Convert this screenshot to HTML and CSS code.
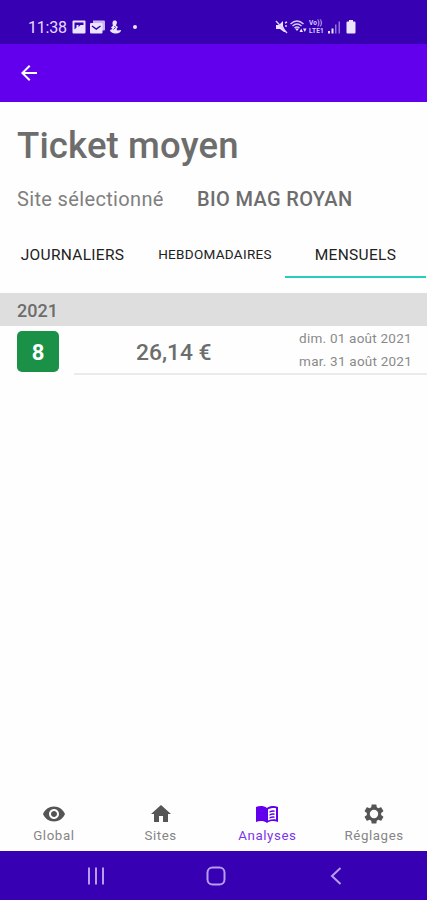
FILE: index.html
```
<!DOCTYPE html>
<html lang="fr">
<head>
  <meta charset="UTF-8">
  <meta name="viewport" content="width=device-width, initial-scale=1">
  <title>Ticket moyen</title>
  <link rel="stylesheet" href="styles.css">
</head>
<body>

  <div class="status-bar">
    <span class="clock">11:38</span>
    <div class="notifications">
      <svg width="14" height="14" viewBox="0 0 14 14">
        <path fill-rule="evenodd" d="M1.500.5h11a1 1 0 0 1 1 1v11a1 1 0 0 1-1 1h-11a1 1 0 0 1-1-1v-11a1 1 0 0 1 1-1zM2.500 2.500v7l2-2V5h2v2l2-2h3V2.500z"/>
      </svg>
      <svg width="15" height="14" viewBox="0 0 15 14">
        <path d="M3 .5h11a1 1 0 0 1 1 1v8a1 1 0 0 1-1 1H3z" opacity=".8"/>
        <rect x="0" y="3" width="12.500" height="10.500" rx="1"/>
        <path class="cut" d="M2 6l4.300 3L10.500 6"/>
      </svg>
      <svg width="13" height="14" viewBox="0 0 13 14">
        <path d="M5.500.5c2.500 0 3 2 2 3.500L7 5.500l2 1.500-1.500 2 1 1.500 3.500-.5c0 2-2 3.500-5 3.500S1 12 1 10l2.500-1L2 7.500l2-2C3 3 3.500.5 5.500.5z"/>
        <path class="cut thin" d="M5.500 6l1 1.500-2 2"/>
      </svg>
      <span class="dot"></span>
    </div>
    <div class="indicators">
      <svg width="13" height="14" viewBox="0 0 13 14">
        <path d="M1 5h3l4-4v5l3 6H9l-4-3H1z"/>
        <path class="line" d="M1 1l11 12M10 3l2-1M10 6h2"/>
      </svg>
      <svg width="17" height="14" viewBox="0 0 17 14">
        <path class="line" d="M0.500 4q6.500-6 13 0M2.500 6q4.500-4 9 0M4.500 8q2.500-2 5 0"/>
        <path d="M5 8.500h4L7 11zM9.500 12l1.700-3.500L13 12zM13 8.500h3.500L14.800 12z"/>
      </svg>
      <span class="volte"><b>Vo))</b><b>LTE1</b></span>
      <svg width="13" height="14" viewBox="0 0 13 14">
        <path d="M0 11h2v2.500H0zM3.500 8.500h2v5h-2z"/>
        <path d="M7 4.500h1.500v9H7zM10.500 1.500H12v12h-1.500z" opacity=".5"/>
      </svg>
      <svg class="battery" width="10" height="14" viewBox="0 0 10 14">
        <path d="M3 0h4v1.500h1.500a1 1 0 0 1 1 1v10a1 1 0 0 1-1 1h-7a1 1 0 0 1-1-1v-10a1 1 0 0 1 1-1H3z"/>
      </svg>
    </div>
  </div>

  <header class="app-bar">
    <svg width="24" height="24" viewBox="0 0 24 24">
      <path d="M20 11H7.830l5.590-5.590L12 4l-8 8 8 8 1.410-1.410L7.830 13H20v-2z"/>
    </svg>
  </header>

  <main>
    <h1>Ticket moyen</h1>
    <div class="site">
      <span class="site-label">Site sélectionné</span>
      <span class="site-name">BIO MAG ROYAN</span>
    </div>

    <div class="tabs">
      <div class="tab">JOURNALIERS</div>
      <div class="tab tab-small">HEBDOMADAIRES</div>
      <div class="tab active">MENSUELS</div>
    </div>

    <div class="year">2021</div>
    <div class="row">
      <div class="month">8</div>
      <div class="row-body">
        <span class="amount">26,14 €</span>
        <div class="dates">
          <span>dim. 01 août 2021</span>
          <span>mar. 31 août 2021</span>
        </div>
      </div>
    </div>
  </main>

  <nav class="bottom-nav">
    <div class="nav-item">
      <svg width="24" height="24" viewBox="0 0 24 24">
        <path d="M12 4.500C7 4.500 2.730 7.610 1 12c1.730 4.390 6 7.500 11 7.500s9.270-3.110 11-7.500c-1.730-4.390-6-7.500-11-7.500zM12 17c-2.760 0-5-2.240-5-5s2.240-5 5-5 5 2.240 5 5-2.240 5-5 5zm0-8c-1.660 0-3 1.340-3 3s1.340 3 3 3 3-1.340 3-3-1.340-3-3-3z"/>
      </svg>
      <span>Global</span>
    </div>
    <div class="nav-item">
      <svg width="24" height="24" viewBox="0 0 24 24">
        <path d="M10 20v-6h4v6h5v-8h3L12 3 2 12h3v8z"/>
      </svg>
      <span>Sites</span>
    </div>
    <div class="nav-item selected">
      <svg width="24" height="24" viewBox="0 0 24 24">
        <path fill-rule="evenodd" d="M1 5C4.500 3.500 9 3.700 12 6c3-2.300 7.500-2.500 11-1v15c-4-1.400-8-1.200-11 1-3-2.200-7-2.400-11-1zM13 7.500v11c2.500-1.200 5.300-1.500 8-1V6.300c-2.700-.7-5.500-.3-8 1.200z"/>
        <path d="M14.500 9.200q2.500-1.200 5-.7v1.500q-2.500-.5-5 .7zM14.500 12.200q2.500-1.200 5-.7V13q-2.500-.5-5 .7zM14.500 15.200q2.500-1.200 5-.7V16q-2.500-.5-5 .7z"/>
      </svg>
      <span>Analyses</span>
    </div>
    <div class="nav-item">
      <svg width="24" height="24" viewBox="0 0 24 24">
        <path d="M19.140 12.940c.04-.3.060-.61.060-.94 0-.32-.02-.64-.07-.94l2.030-1.580c.18-.14.230-.41.120-.61l-1.920-3.320c-.12-.22-.37-.29-.59-.22l-2.390.96c-.5-.38-1.030-.7-1.620-.94l-.36-2.540c-.04-.24-.24-.41-.48-.41h-3.840c-.24 0-.43.170-.47.410l-.36 2.540c-.59.240-1.130.570-1.620.940l-2.390-.96c-.22-.08-.47 0-.59.220L2.740 8.870c-.12.210-.08.470.12.610l2.030 1.580c-.05.300-.09.630-.09.940s.02.640.07.940l-2.030 1.580c-.18.140-.23.410-.12.610l1.920 3.320c.12.220.37.290.59.220l2.390-.96c.5.380 1.030.7 1.620.94l.36 2.540c.05.240.24.410.48.410h3.840c.24 0 .44-.17.470-.41l.36-2.540c.59-.24 1.130-.56 1.620-.94l2.390.96c.22.080.470 0 .59-.22l1.920-3.320c.12-.22.070-.47-.12-.61l-2.010-1.580zM12 16.200a4.200 4.200 0 1 1 0-8.400 4.200 4.200 0 0 1 0 8.400z"/>
      </svg>
      <span>Réglages</span>
    </div>
  </nav>

  <div class="system-nav">
    <svg width="20" height="20" viewBox="0 0 20 20"><path d="M3 1.500v17M10 1.500v17M17 1.500v17"/></svg>
    <svg width="20" height="20" viewBox="0 0 20 20"><rect x="1.500" y="1.500" width="17" height="17" rx="5"/></svg>
    <svg width="20" height="20" viewBox="0 0 20 20"><path d="M14.500 2L6 10l8.500 8"/></svg>
  </div>

</body>
</html>
```
FILE: styles.css
```
* {
  box-sizing: border-box;
}

body {
  margin: 0;
  height: 900px;
  display: flex;
  flex-direction: column;
  overflow: hidden;
  font-family: Roboto, sans-serif;
  background: #fefefe;
  color: #6d6d6d;
}

svg {
  display: block;
  flex-shrink: 0;
}

/* status bar */
.status-bar {
  height: 44px;
  padding: 10px 71px 0 28px;
  display: flex;
  align-items: center;
  background: #3700b3;
  color: #e6dcff;
  fill: #ece4ff;
}

.clock {
  width: 44px;
  font-size: 16px;
  letter-spacing: -0.2px;
}

.notifications {
  display: flex;
  align-items: center;
  gap: 4px;
}

.cut {
  fill: none;
  stroke: #3700b3;
  stroke-width: 1.5;
}

.thin {
  stroke-width: 0.8;
}

.dot {
  width: 4px;
  height: 4px;
  margin-left: 7px;
  border-radius: 50%;
  background: #ece4ff;
}

.indicators {
  display: flex;
  align-items: center;
  margin-left: auto;
  gap: 2px;
}

.line {
  fill: none;
  stroke: #d9ccff;
  stroke-width: 1.4;
}

.volte {
  width: 17px;
  color: #d9ccff;
  font-size: 6.5px;
  line-height: 8px;
  letter-spacing: 0.2px;
}

.volte b {
  display: block;
}

.battery {
  margin-left: 3px;
}

/* app bar */
.app-bar {
  height: 58px;
  padding: 0 17px;
  display: flex;
  align-items: center;
  background: #6200ee;
  fill: #fff;
}

main {
  flex: 1;
}

h1 {
  margin: 0;
  padding: 22px 17px 0;
  font-size: 36.5px;
  line-height: 44px;
  font-weight: 500;
  letter-spacing: 0.15px;
  color: #6d6d6d;
}

.site {
  display: flex;
  padding: 19px 17px 0;
  font-size: 20px;
  line-height: 24px;
}

.site-label {
  width: 180px;
  letter-spacing: 0.35px;
  color: #808080;
}

.site-name {
  font-weight: 500;
  letter-spacing: 0.35px;
}

/* tabs */
.tabs {
  display: grid;
  grid-template-columns: 145px 140px 141px;
  height: 67px;
}

.tab {
  padding-top: 34px;
  border-bottom: 2px solid transparent;
  font-size: 15.5px;
  line-height: 20px;
  letter-spacing: 0.3px;
  text-align: center;
  color: #222;
}

.tab-small {
  padding-top: 33px;
  font-size: 13.5px;
}

.tab.active {
  border-bottom-color: #26cdb8;
}

/* list */
.year {
  height: 33px;
  margin-top: 15px;
  padding-left: 17px;
  font-size: 18px;
  line-height: 35px;
  font-weight: 500;
  background: #dedede;
}

.row {
  display: flex;
  height: 49px;
  padding-left: 17px;
}

.month {
  width: 42px;
  height: 41px;
  margin: 5px 15px 0 0;
  border-radius: 5px;
  background: #1b9147;
  color: #fff;
  font-size: 22px;
  line-height: 43px;
  font-weight: 700;
  text-align: center;
}

.row-body {
  flex: 1;
  display: flex;
  justify-content: space-between;
  padding: 0 15px 0 62px;
  border-bottom: 2px solid #ebebeb;
}

.amount {
  font-size: 22.8px;
  line-height: 54px;
  font-weight: 500;
}

.dates {
  display: flex;
  flex-direction: column;
  padding-top: 1px;
  font-size: 13.5px;
  line-height: 23px;
  letter-spacing: 0.23px;
  color: #8a8a8a;
}

/* bottom navigation */
.bottom-nav {
  display: grid;
  grid-template-columns: repeat(4, 1fr);
  height: 56px;
  fill: #555;
}

.nav-item {
  display: flex;
  flex-direction: column;
  align-items: center;
  padding: 7px 0 0 1px;
  font-size: 13.3px;
  line-height: 20px;
  letter-spacing: 0.6px;
  color: #858585;
}

.nav-item.selected {
  fill: #6200ee;
  color: #7a36e8;
}

.system-nav {
  height: 49px;
  padding: 1px 81px 0 86px;
  display: flex;
  align-items: center;
  justify-content: space-between;
  background: #3700b3;
}

.system-nav svg {
  fill: none;
  stroke: #b79df0;
  stroke-width: 2;
}
```
